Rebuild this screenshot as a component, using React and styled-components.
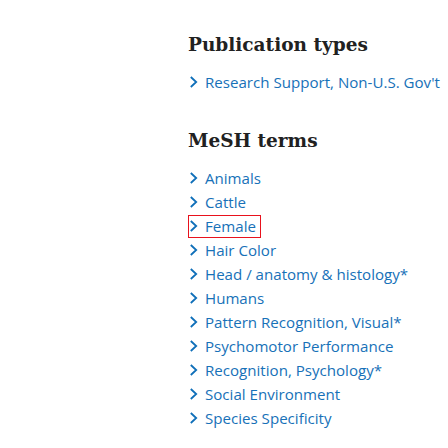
import React from 'react';
import styled, { createGlobalStyle } from 'styled-components';

const GlobalStyle = createGlobalStyle`
  body {
    margin: 0;
    background: #fff;
    font-family: "Open Sans", sans-serif;
  }
`;

const Page = styled.div`
  width: 448px;
  height: 448px;
  overflow: hidden;
  padding: 30px 0 0 188px;
  box-sizing: border-box;
`;

const Section = styled.section`
  margin-bottom: 32px;
`;

const Heading = styled.h2`
  margin: 0 0 10px;
  font-family: "DejaVu Serif", serif;
  font-weight: bold;
  font-size: 18.5px;
  line-height: 30px;
  color: #212121;
`;

const List = styled.ul`
  list-style: none;
  margin: 0;
  padding: 0;
`;

const Item = styled.li`
  height: 24px;
  display: flex;
  align-items: center;
`;

const Term = styled.a`
  display: inline-flex;
  align-items: center;
  gap: 7px;
  height: 23px;
  padding: 0 5px 0 1px;
  box-sizing: border-box;
  font-size: 15.1px;
  font-weight: 400;
  color: #1771b8;
  text-decoration: none;
  white-space: nowrap;
  outline: ${(p) => (p.$focused ? '1px solid #e8121d' : 'none')};
  outline-offset: -1px;
`;

const Chevron = () => (
  <svg width="9" height="12" viewBox="0 0 9 12">
    <path d="M1.8 1 L7.2 6 L1.8 11" fill="none" stroke="#0f6fb9" strokeWidth="1.8" />
  </svg>
);

const pubTypes = ["Research Support, Non-U.S. Gov't"];
const mesh = [
  'Animals',
  'Cattle',
  'Female',
  'Hair Color',
  'Head / anatomy & histology*',
  'Humans',
  'Pattern Recognition, Visual*',
  'Psychomotor Performance',
  'Recognition, Psychology*',
  'Social Environment',
  'Species Specificity',
];

export default function App() {
  return (
    <Page>
      <GlobalStyle />
      <Section>
        <Heading>Publication types</Heading>
        <List>
          {pubTypes.map((t) => (
            <Item key={t}>
              <Term href="#">
                <Chevron />
                {t}
              </Term>
            </Item>
          ))}
        </List>
      </Section>
      <Section>
        <Heading>MeSH terms</Heading>
        <List>
          {mesh.map((t) => (
            <Item key={t}>
              <Term href="#" $focused={t === 'Female'}>
                <Chevron />
                {t}
              </Term>
            </Item>
          ))}
        </List>
      </Section>
    </Page>
  );
}
